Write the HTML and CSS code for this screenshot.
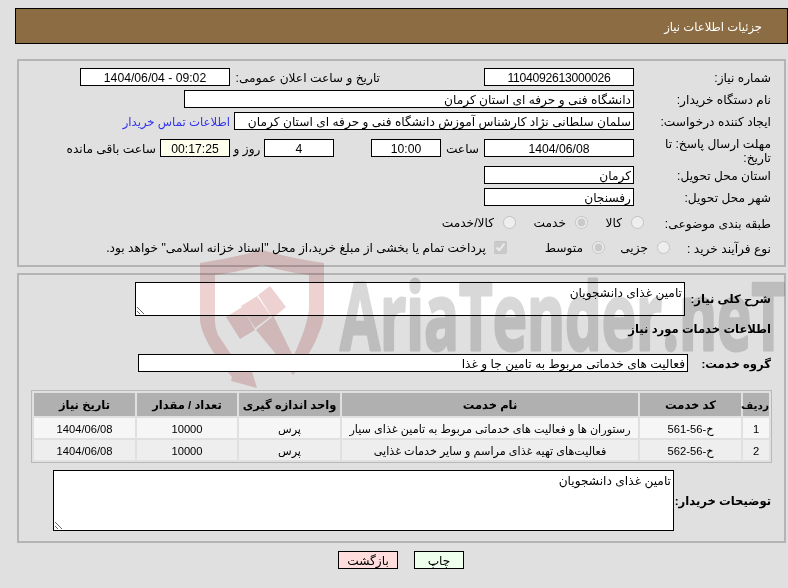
FILE: index.html
```html
<!DOCTYPE html>
<html lang="fa" dir="rtl">
<head>
<meta charset="utf-8">
<title>جزئیات اطلاعات نیاز</title>
<link rel="stylesheet" href="styles.css">
</head>
<body>
<header class="title-bar"><h1>جزئیات اطلاعات نیاز</h1></header>

<section class="panel panel-info">
  <div class="row">
    <span class="label">شماره نیاز:</span>
    <div class="field w150 center num">1104092613000026</div>
    <span class="text announce">تاریخ و ساعت اعلان عمومی:</span>
    <div class="field w150 center">09:02 - 1404/06/04</div>
  </div>
  <div class="row">
    <span class="label">نام دستگاه خریدار:</span>
    <div class="field w450">دانشگاه فنی و حرفه ای استان کرمان</div>
  </div>
  <div class="row">
    <span class="label">ایجاد کننده درخواست:</span>
    <div class="field w400">سلمان سلطانی نژاد کارشناس آموزش دانشگاه فنی و حرفه ای استان کرمان</div>
    <a class="contact" href="#">اطلاعات تماس خریدار</a>
  </div>
  <div class="row row-deadline">
    <span class="label">مهلت ارسال پاسخ: تا تاریخ:</span>
    <div class="field w150 center">1404/06/08</div>
    <span class="text t-hour">ساعت</span>
    <div class="field w70 center">10:00</div>
    <span class="text t-gap"></span>
    <div class="field w70 center">4</div>
    <span class="text t-day">روز و</span>
    <div class="field w70 center ivory">00:17:25</div>
    <span class="text t-left">ساعت باقی مانده</span>
  </div>
  <div class="row">
    <span class="label">استان محل تحویل:</span>
    <div class="field w150">کرمان</div>
  </div>
  <div class="row">
    <span class="label">شهر محل تحویل:</span>
    <div class="field w150">رفسنجان</div>
  </div>
  <div class="row row-opts">
    <span class="label l-cat">طبقه بندی موضوعی:</span>
    <label class="opt o1"><input type="radio" name="cat" disabled>کالا</label>
    <label class="opt o2"><input type="radio" name="cat" disabled checked>خدمت</label>
    <label class="opt o3"><input type="radio" name="cat" disabled>کالا/خدمت</label>
  </div>
  <div class="row row-opts">
    <span class="label l-kind">نوع فرآیند خرید :</span>
    <label class="opt o4"><input type="radio" name="kind" disabled>جزیی</label>
    <label class="opt o5"><input type="radio" name="kind" disabled checked>متوسط</label>
    <label class="opt o6"><input type="checkbox" disabled checked>پرداخت تمام یا بخشی از مبلغ خرید،از محل "اسناد خزانه اسلامی" خواهد بود.</label>
  </div>
</section>

<section class="panel panel-service">
  <div class="row row-desc">
    <span class="label strong">شرح کلی نیاز:</span>
    <textarea class="area a1" readonly>تامین غذای دانشجویان</textarea>
  </div>
  <h2 class="subhead">اطلاعات خدمات مورد نیاز</h2>
  <div class="row row-group">
    <span class="label strong">گروه خدمت:</span>
    <div class="field w550">فعالیت های خدماتی مربوط به تامین جا و غذا</div>
  </div>
  <table class="items">
    <thead>
      <tr><th class="c1">ردیف</th><th class="c2">کد خدمت</th><th class="c3">نام خدمت</th><th class="c4">واحد اندازه گیری</th><th class="c5">تعداد / مقدار</th><th class="c6">تاریخ نیاز</th></tr>
    </thead>
    <tbody>
      <tr><td>1</td><td>خ-56-561</td><td>رستوران ها و فعالیت های خدماتی مربوط به تامین غذای سیار</td><td>پرس</td><td>10000</td><td>1404/06/08</td></tr>
      <tr><td>2</td><td>خ-56-562</td><td>فعالیت‌های تهیه غذای مراسم و سایر خدمات غذایی</td><td>پرس</td><td>10000</td><td>1404/06/08</td></tr>
    </tbody>
  </table>
  <div class="row row-notes">
    <span class="label strong">توضیحات خریدار:</span>
    <textarea class="area a2" readonly>تامین غذای دانشجویان</textarea>
  </div>
</section>

<div class="actions">
  <button class="btn print" type="button">چاپ</button>
  <button class="btn back" type="button">بازگشت</button>
</div>

<svg class="watermark" width="588" height="140" viewBox="200 250 588 140" aria-hidden="true">
  <path fill="#eed2d2" d="M232 377L231 381L257 388L249 362L243 372L218 335Q215 328 215 322V275Q240 272 262 265Q285 272 309 275V308Q308 325 293 357V375Q312 352 318 335Q324 322 324 312V263Q290 258 262 250Q232 258 200 263V320Q201 340 232 377Z"/>
  <path fill="#eed2d2" d="M226 317L242 307L255 330L240 339ZM241 306L257 296L271 316L255 328ZM258 295L270 286L286 307L274 317L294 358L293 375L256 330L272 317Z"/>
  <text class="wm-text" x="340" y="350" font-size="94" textLength="445" lengthAdjust="spacingAndGlyphs" fill="#d8d8d8" stroke="#d8d8d8" stroke-width="3" stroke-linejoin="round">AriaTender.neT</text>
</svg>
</body>
</html>
```
FILE: styles.css
```css
html { background: #e0e0e0; }
body {
  margin: 0;
  height: 588px;
  overflow: hidden;
  font: 12.2px/16px "Liberation Sans", "DejaVu Sans", sans-serif;
  color: #000;
}
.watermark { position: absolute; left: 200px; top: 250px; mix-blend-mode: multiply; pointer-events: none; }
.wm-text { font-family: "Open Sans", sans-serif; font-weight: 700; direction: ltr; unicode-bidi: bidi-override; }

.title-bar {
  box-sizing: border-box;
  height: 36px;
  margin: 8px 0 0 15px;
  background: #8c6c42;
  border: 1px solid #000;
  display: flex;
  align-items: center;
  padding-right: 25px;
}
.title-bar h1 { margin: 2px 0 0; font-size: 11.6px; font-weight: 400; color: #fff; }

.panel {
  box-sizing: border-box;
  margin: 0 2px 0 17px;
  border: 2px solid #b4b4b4;
}
.panel-info { height: 208px; margin-top: 15px; padding-top: 7px; }
.panel-service { height: 270px; margin-top: 6px; padding-top: 7px; }

.row { display: flex; align-items: center; height: 18px; margin-bottom: 4px; }
.label { flex: none; box-sizing: border-box; width: 150px; padding-right: 13px; padding-top: 2px; white-space: nowrap; }
.strong { font-weight: 700; font-size: 11.6px; padding-top: 1px; }
.field {
  flex: none;
  box-sizing: border-box;
  height: 18px;
  line-height: 14px;
  background: #fff;
  border: 1px solid #000;
  padding: 2px 2px 0;
  white-space: nowrap;
  overflow: hidden;
}
.center { text-align: center; }
.w70 { width: 70px; }
.w150 { width: 150px; }
.w400 { width: 400px; }
.w450 { width: 450px; }
.w550 { width: 550px; }
.ivory { background: #ffffee; }
.num { letter-spacing: -.28px; }
.text { flex: none; padding-top: 2px; }
.announce { margin: 0 104px 0 5px; width: 145px; text-align: right; white-space: nowrap; }
.contact { margin-right: 4px; padding-top: 2px; color: #3333ee; text-decoration: none; white-space: nowrap; font-size: 11.7px; }

.row-deadline { margin-top: 9px; margin-bottom: 9px; }
.row-deadline .label { line-height: 14px; margin-top: 4px; padding-left: 15px; white-space: normal; }
.t-hour { width: 43px; text-align: center; }
.t-gap { width: 37px; }
.t-day { width: 34px; text-align: center; }
.t-left { margin-right: 4px; white-space: nowrap; }

.row-opts { height: 15px; margin-top: 9px; margin-bottom: 0; }
.row-opts + .row-opts { margin-top: 10px; }
.l-cat { width: 140px; }
.l-kind { width: 114px; }
.opt { display: inline-flex; align-items: center; white-space: nowrap; flex: none; color: #000; }
.opt input { margin: 0 0 0 9px; width: 13px; height: 13px; flex: none; }
.o1 { width: 56px; }
.o2 { width: 72px; }
.o4 { width: 65px; }
.o5 { width: 98px; }
.opt.o6 input { margin-left: 8px; }

.row-desc { height: 33px; margin-bottom: 0; }
.row-desc .label { width: 99px; }
.area {
  display: block;
  flex: none;
  box-sizing: border-box;
  background: #fff;
  border: 1px solid #000;
  border-radius: 0;
  outline: 0;
  padding: 2px;
  margin: 0;
  font: inherit;
  color: #000;
}
.a1 { width: 550px; height: 34px; }
.a2 { width: 621px; height: 61px; }
.subhead { margin: 6px 13px 0 0; font-size: 11.6px; line-height: 16px; font-weight: 700; }
.row-group { margin-top: 17px; margin-bottom: 0; position: relative; z-index: 1; }
.row-group .label { width: 96px; }

.items {
  width: 741px;
  margin: 18px 12px 0 0;
  border-collapse: separate;
  border-spacing: 2px;
  border: 1px solid #b9b9b9;
  table-layout: fixed;
  font-size: 11.2px;
}
.items th { height: 23px; padding: 0; background: #b0b0b0; font-weight: 700; font-size: 11.5px; }
.items td { height: 19px; padding: 1px 0 0; text-align: center; }
.items tbody tr:nth-child(1) td { background: #f6f6f6; }
.items tbody tr:nth-child(2) td { background: #eeeeee; }
.items th.c1 { width: 26px; font-size: 10.5px; }
.c2 { width: 101px; }
.c3 { width: 296px; }
.c4 { width: 101px; }
.c5 { width: 100px; }
.c6 { width: 101px; }

.row-notes { height: 61px; margin-top: 7px; margin-bottom: 0; }
.row-notes .label { width: 110px; }

.actions { display: flex; justify-content: center; gap: 16px; margin: 8px 0 0 0; padding-left: 14px; }
.btn {
  box-sizing: border-box;
  height: 18px;
  border: 1px solid #000;
  border-radius: 0;
  padding: 1px 0 0;
  font: inherit;
  color: #000;
}
.print { width: 50px; background: #eeffee; }
.back { width: 60px; background: #ffdddd; }
```
